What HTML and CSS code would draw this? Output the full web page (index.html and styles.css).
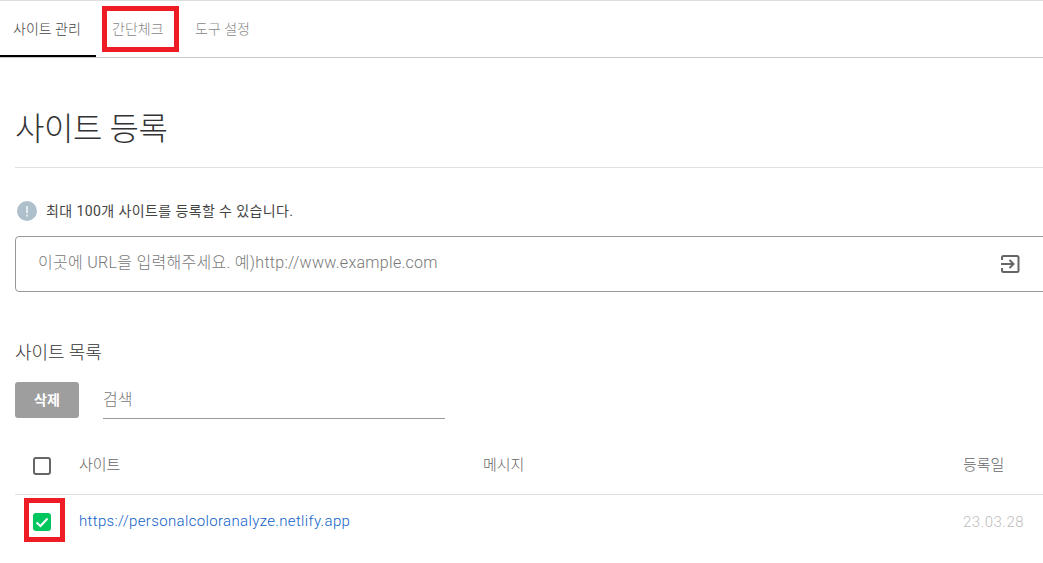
FILE: index.html
```html
<!DOCTYPE html>
<html lang="ko">
<head>
<meta charset="utf-8">
<title>사이트 관리</title>
<link rel="stylesheet" href="styles.css">
</head>
<body>
<nav class="tabs">
  <a class="tab tab-active">사이트 관리</a>
  <a class="tab tab-check">간단체크</a>
  <a class="tab tab-tool">도구 설정</a>
</nav>
<main class="content">
  <h1 class="title">사이트 등록</h1>
  <p class="notice">
    <svg class="notice-icon" viewBox="0 0 20 20"><circle cx="10" cy="10" r="10" fill="#adc0cc"/><rect x="9" y="5" width="2" height="7" fill="#e4ebef"/><rect x="9" y="13.5" width="2" height="2" fill="#e4ebef"/></svg>
    최대 100개 사이트를 등록할 수 있습니다.
  </p>
  <div class="url-box">
    <span class="url-placeholder">이곳에 URL을 입력해주세요. 예)http://www.example.com</span>
    <svg class="url-icon" viewBox="0 0 20 20" fill="none" stroke="#666" stroke-width="2"><path d="M2 6V3.500A1.500 1.500 0 0 1 3.500 2H17A1.500 1.500 0 0 1 18.500 3.500V16.500A1.500 1.500 0 0 1 17 18H3.500A1.500 1.500 0 0 1 2 16.500V14"/><path d="M1 10H13M9.500 6L13.500 10L9.500 14"/></svg>
  </div>
  <h2 class="list-title">사이트 목록</h2>
  <div class="toolbar">
    <button class="delete">삭제</button>
    <div class="search">검색</div>
  </div>
  <div class="row row-head">
    <span class="cell-check"><span class="box"></span></span>
    <span class="cell-site">사이트</span>
    <span class="cell-msg">메시지</span>
    <span class="cell-date">등록일</span>
  </div>
  <div class="row row-body">
    <span class="cell-check"><span class="box-on"><svg viewBox="0 0 18 18" fill="none" stroke="#fff" stroke-width="2"><path d="M3.500 9.500L7.500 13L14.500 5.500"/></svg></span></span>
    <a class="cell-site link">https://personalcoloranalyze.netlify.app</a>
    <span class="cell-msg"></span>
    <span class="cell-date date">23.03.28</span>
  </div>
</main>
<div class="mark mark-tab"></div>
<div class="mark mark-check"></div>
</body>
</html>
```
FILE: styles.css
```css
* { box-sizing: border-box; }
html, body { height: 563px; overflow: hidden; }
body {
  margin: 0;
  position: relative;
  background: #fff;
  color: #333;
  font-family: Roboto, "Noto Sans CJK KR", sans-serif;
  border-top: 1px solid #ddd;
}
.tabs {
  display: flex;
  height: 57px;
  border-bottom: 1px solid #c8c8c8;
}
.tab {
  height: 56px;
  padding-top: 18px;
  font-size: 14px;
  line-height: 20px;
  color: #888;
  font-weight: 300;
}
.tab-active {
  width: 96px;
  padding-left: 13px;
  color: #444;
  font-weight: 300;
  border-bottom: 2px solid #000;
}
.tab-check { margin-left: 16px; width: 83px; }
.content { padding-left: 15px; }
.title {
  margin: 0;
  padding-top: 48px;
  height: 110px;
  font-size: 32px;
  line-height: 46px;
  font-weight: 300;
  letter-spacing: -0.4px;
  color: #333;
  border-bottom: 1px solid #e0e0e0;
}
.notice {
  margin: 32px 0 0;
  display: flex;
  align-items: center;
  gap: 9px;
  height: 20px;
  padding-left: 2px;
  font-size: 14px;
  letter-spacing: 0.4px;
  color: #444;
}
.notice-icon { width: 20px; height: 20px; margin-top: 2px; }
.url-box {
  margin-top: 16px;
  margin-right: -4px;
  height: 56px;
  display: flex;
  align-items: center;
  justify-content: space-between;
  padding: 0 26px 0 22px;
  border: 1px solid #999;
  border-radius: 4px;
}
.url-placeholder {
  font-size: 16px;
  font-weight: 300;
  letter-spacing: 0.29px;
  color: #777;
  margin-bottom: 6px;
}
.url-icon { width: 20px; height: 20px; }
.list-title {
  margin: 49px 0 0;
  font-size: 18px;
  line-height: 24px;
  font-weight: 300;
  letter-spacing: -0.1px;
  color: #333;
}
.toolbar {
  margin-top: 17px;
  display: flex;
  gap: 24px;
  height: 36px;
}
.delete {
  width: 64px;
  height: 36px;
  border: 0;
  border-radius: 3px;
  background: #9e9e9e;
  color: #fff;
  font: 700 14px Roboto, "Noto Sans CJK KR", sans-serif;
  padding-bottom: 3px;
}
.search {
  width: 342px;
  height: 37px;
  font-size: 16px;
  line-height: 36px;
  font-weight: 300;
  color: #777;
  border-bottom: 1px solid #999;
}
.row {
  display: flex;
  align-items: center;
  font-size: 15px;
}
.row-head { margin-top: 21px; height: 56px; border-bottom: 1px solid #e0e0e0; color: #666; font-weight: 300; }
.row-head .cell-site, .row-head .cell-msg, .row-head .cell-date { margin-bottom: 6px; }
.row-head .cell-check { margin-bottom: 2px; }
.row-body { height: 53px; }
.row-body .cell-site { margin-bottom: 2px; }
.cell-check { width: 64px; display: flex; padding-left: 18px; }
.box { width: 18px; height: 18px; border: 2px solid #666; border-radius: 3px; }
.box-on { width: 18px; height: 18px; border-radius: 3px; background: #00c65e; display: flex; }
.box-on svg { width: 18px; height: 18px; }
.cell-site { width: 404px; }
.link { color: #0f5fc8; letter-spacing: 0.35px; font-weight: 300; }
.cell-msg { flex: 1; }
.cell-date { width: 80px; }
.date { color: #bdbdbd; letter-spacing: 0.5px; font-weight: 300; }
.mark { position: absolute; border: 5px solid #ee1c25; }
.mark-tab { left: 102px; top: 5px; width: 77px; height: 46px; }
.mark-check { left: 24px; top: 497px; width: 41px; height: 44px; }
```
